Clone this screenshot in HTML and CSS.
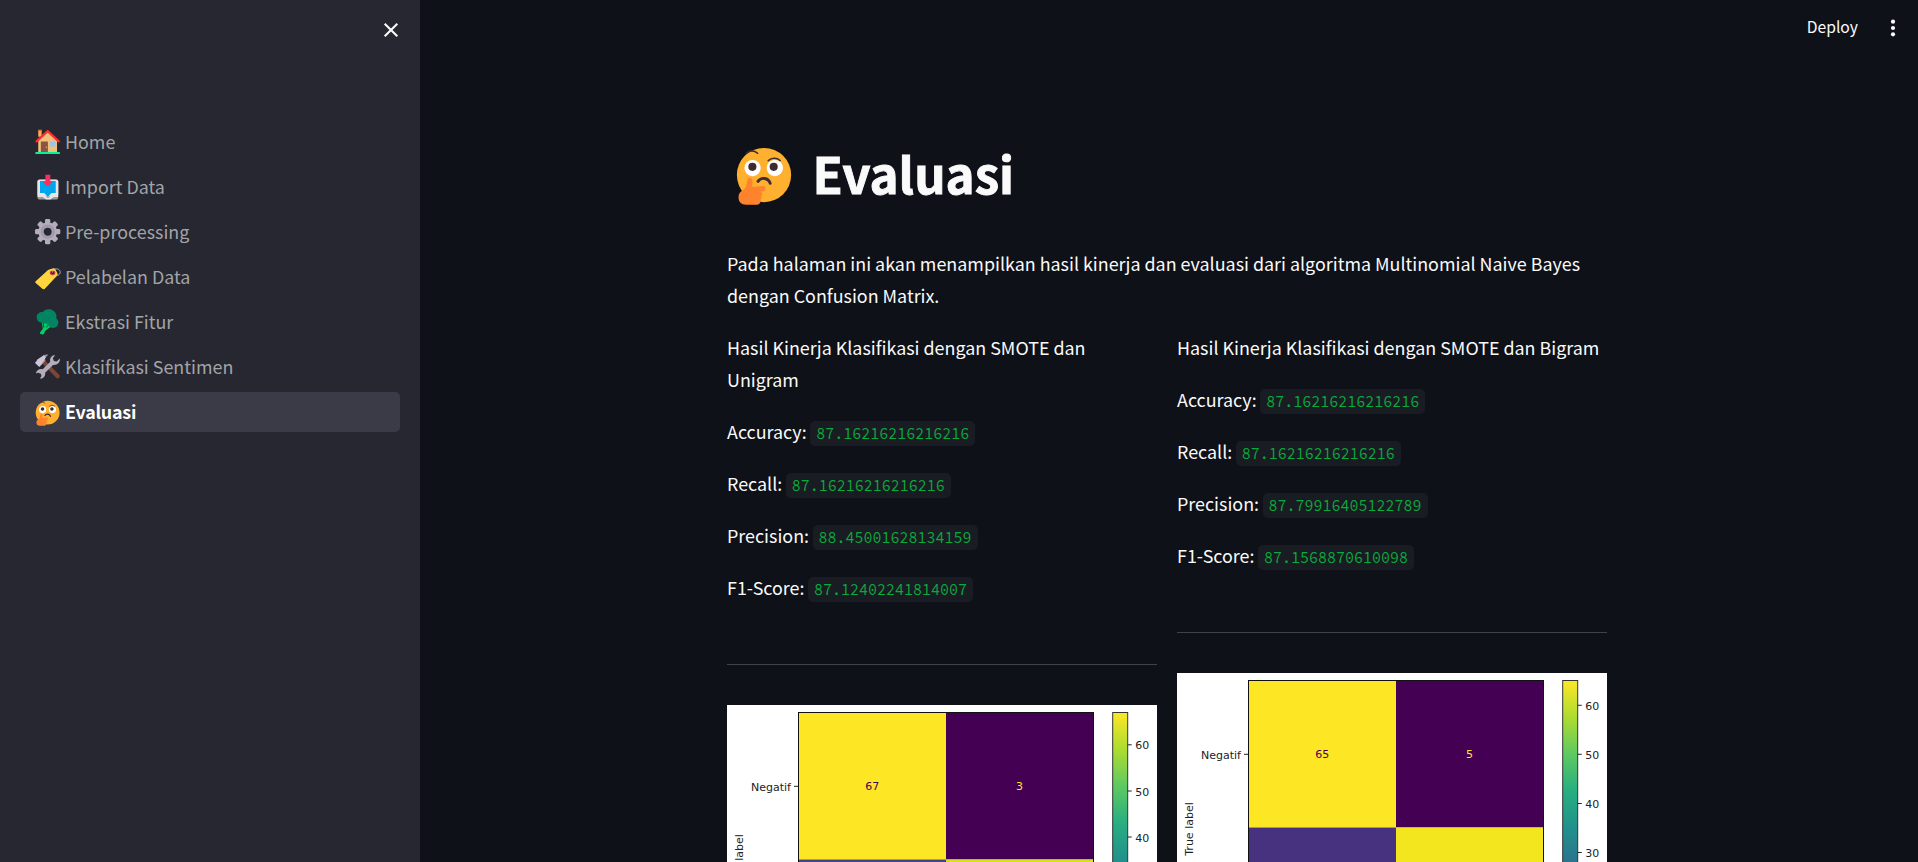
FILE: index.html
```html
<!DOCTYPE html>
<html lang="id">
<head>
<meta charset="utf-8">
<title>Evaluasi</title>
<link rel="stylesheet" href="styles.css">
</head>
<body>
<svg class="defs" width="0" height="0" aria-hidden="true">
  <defs>
    <symbol id="thinking" viewBox="0 0 32 32">
      <circle cx="16" cy="16" r="14" fill="#ffb02e"/>
      <circle cx="10.1" cy="12.4" r="4.2" fill="#fff"/>
      <circle cx="21.6" cy="12.4" r="4.2" fill="#fff"/>
      <circle cx="10" cy="11.8" r="2.1" fill="#402a32"/>
      <circle cx="21" cy="11.8" r="2.1" fill="#402a32"/>
      <path d="M7 4.7C8.4 3.3 10.8 3 12.7 4.8M18.2 8.6C19.8 7.1 22.5 6.9 24.3 8.5" fill="none" stroke="#402a32" stroke-width=".8" stroke-linecap="round"/>
      <path d="M12.9 19.3C14.5 17 18.2 17.2 19.2 20.3" fill="none" stroke="#402a32" stroke-width="1.5" stroke-linecap="round"/>
      <path d="M8.6 17.4c1.3 0 1.6 1.2 1.5 2.3L9.9 22.2l5.7-.5c1.5 0 1.7 2.3.2 2.6l-1.3.3c.7.5.7 1.6 0 2.1.4.6.3 1.6-.3 2 .3 1.4-.4 2.7-2 2.7H6.8C4 31.4 2.6 29.5 2.9 27c.1-1.5.8-2.3 2.2-3.1 1-.6 1.5-1.4 1.8-2.6l.5-2.5c.2-.9.5-1.4 1.2-1.4z" fill="#ff822d"/>
    </symbol>
    <symbol id="home" viewBox="0 0 32 32">
      <path d="M5 3.2h4v7H5z" fill="#f3ad61"/>
      <path d="M16 4.5 5 15v14.5h22V15z" fill="#f3c07b"/>
      <path d="M8 15.8h8.3v13.7H8z" fill="#8c5543"/>
      <circle cx="14.5" cy="22.5" r=".8" fill="#f3ad61"/>
      <rect x="19" y="15.8" width="6" height="6" rx=".8" fill="#8cc8fb"/>
      <path d="M3 15.7 16 3.7l13 12" fill="none" stroke="#f8312f" stroke-width="2.6" stroke-linecap="round" stroke-linejoin="round"/>
      <rect x="1.5" y="28.2" width="29" height="2.4" rx="1" fill="#00f397"/>
      <path d="M4.8 2.6h4.4" stroke="#ff822d" stroke-width="1.3"/>
    </symbol>
    <symbol id="inbox" viewBox="0 0 32 32">
      <rect x="4" y="8" width="24.5" height="23" rx="3" fill="#9b9b9b"/>
      <rect x="4" y="7.5" width="24.5" height="20" rx="2.5" fill="#e6e6e6"/>
      <path d="M7 9.5h18.5v14h-5L16.2 28 12 23.5H7z" fill="#00a6ed"/>
      <path d="M4.5 25h6.5l4.5 4h1.7l4.5-4h6.5v3h-5l-4 3h-5l-4-3h-6z" fill="#e6e6e6"/>
      <path d="M13.3 2h5.8v8h3L16.2 16l-5.9-6h3z" fill="#f92f60"/>
    </symbol>
    <symbol id="gear" viewBox="0 0 32 32">
      <g fill="#b4acbc">
        <rect x="12.9" y="1.2" width="6.2" height="29.6" rx="1.6"/>
        <rect x="12.9" y="1.2" width="6.2" height="29.6" rx="1.6" transform="rotate(45 16 16)"/>
        <rect x="12.9" y="1.2" width="6.2" height="29.6" rx="1.6" transform="rotate(90 16 16)"/>
        <rect x="12.9" y="1.2" width="6.2" height="29.6" rx="1.6" transform="rotate(135 16 16)"/>
        <circle cx="16" cy="16" r="11"/>
      </g>
      <circle cx="16" cy="16" r="7.2" fill="#262730" stroke="#998ea4" stroke-width="2"/>
      <circle cx="16" cy="16" r="6" fill="none" stroke="#a79db0" stroke-width="2.6"/>
    </symbol>
    <symbol id="tag" viewBox="0 0 32 32">
      <g transform="translate(0 4.4) scale(1 .87)">
        <path d="M2 19.6 15.8 5.2c.9-.9 1.8-1.5 3-1.9L22.6 2c1-.2 2 .2 2.4 1.2l2.3 5.2c.5 1.2.4 2.2-.2 3.3-.6 1.2-1.3 2-2.3 3L12.7 29.6c-.9 1-2 1-2.9.1L2 22c-.8-.8-.8-1.6 0-2.4z" fill="#ffd53e"/>
        <circle cx="21.8" cy="8.2" r="3.3" fill="#d3304d"/>
        <circle cx="21.8" cy="8.2" r="1.7" fill="#262730"/>
        <path d="M21.7 7.8c-.2-4.5 4-5.8 6.8-4.4 3.3 1.8 2.8 6.6-.5 8-1.2.5-2.2.3-3-.1" fill="none" stroke="#c5bdcb" stroke-width="1.1"/>
      </g>
    </symbol>
    <symbol id="broccoli" viewBox="0 0 32 32">
      <path d="m9 16 1.4 8.2L7 28.8c-.3.8.1 1.4.8 1.6l2.3.6c.8.1 1.4-.2 1.7-1l1.2-3.1 6.5-5-3-6z" fill="#00d26a"/>
      <path d="m10.8 17.5.8 5.5M17.8 19.2l-3.6 3.5" stroke="#262730" stroke-width="1"/>
      <path d="M3.2 11.5c-.5-4.3 2.8-7.2 7.3-6.8 2-3.7 8.4-4.2 12.2-1.6 3.3 2.2 4.3 5.7 3.4 8.9 3.3 2.8 3.3 7.4.2 10-2.8 2.3-6.8 2-9.2-.8l-3.2-3.3c-1.9.6-3.3.7-4.8-.5C5.7 17 3.3 15 3.2 11.5z" fill="#008463"/>
    </symbol>
    <symbol id="tools" viewBox="0 0 32 32">
      <path d="m9.3 11.8 3.4-3.2 17 17.2c.8.8.8 1.7.1 2.5l-1 1c-.8.8-1.7.8-2.5 0z" fill="#7d4533"/>
      <path d="M11.3 2.5c1.6-.8 3.3-1 5.4-.5l-4 4.3.8 2.9-5 5-2.3-2z" fill="#9b8fa4"/>
      <path d="M11.3 2.5 14 5l-5.8 9.5-2 2L1 11.3l2-1.6.5-1.8z" fill="#cdc4d6"/>
      <path d="M24.8 2.2c-3.6.2-6.2 3-6 6.6l.2 1.4-8.8 8.8c-3.8-.9-7.5 1.2-7.9 5l2.6-.9 3.1 1.3.8 2.6-1.9 3c3.8.4 6.8-2.7 6.2-6.8l9.2-9.2c4.4.6 8.4-2.5 8.2-7.5l-4 3.4-3.2-.6-1.2-3z" fill="#b4acbc"/>
    </symbol>
    <linearGradient id="viridis" x1="0" y1="1" x2="0" y2="0">
      <stop offset="0" stop-color="#440154"/><stop offset=".125" stop-color="#472d7b"/>
      <stop offset=".25" stop-color="#3b528b"/><stop offset=".375" stop-color="#2c728e"/>
      <stop offset=".5" stop-color="#21918c"/><stop offset=".625" stop-color="#28ae80"/>
      <stop offset=".75" stop-color="#5ec962"/><stop offset=".875" stop-color="#addc30"/>
      <stop offset="1" stop-color="#fde725"/>
    </linearGradient>
  </defs>
</svg>
<div class="app">
  <aside class="sidebar">
    <div class="sidebar-head">
      <svg class="close" viewBox="0 0 16 16"><path d="m1.7 1.7 12.6 12.6m0-12.6L1.7 14.3"/></svg>
    </div>
    <nav class="nav">
      <a class="nav-link"><svg><use href="#home"/></svg><span>Home</span></a>
      <a class="nav-link"><svg><use href="#inbox"/></svg><span>Import Data</span></a>
      <a class="nav-link"><svg><use href="#gear"/></svg><span>Pre-processing</span></a>
      <a class="nav-link"><svg><use href="#tag"/></svg><span>Pelabelan Data</span></a>
      <a class="nav-link"><svg><use href="#broccoli"/></svg><span>Ekstrasi Fitur</span></a>
      <a class="nav-link"><svg><use href="#tools"/></svg><span>Klasifikasi Sentimen</span></a>
      <a class="nav-link active"><svg><use href="#thinking"/></svg><span>Evaluasi</span></a>
    </nav>
  </aside>
  <main class="main">
    <header class="toolbar">
      <span class="deploy">Deploy</span>
      <svg class="menu" viewBox="0 0 6 18"><circle cx="3" cy="2.7" r="2.1"/><circle cx="3" cy="9" r="2.1"/><circle cx="3" cy="15.3" r="2.1"/></svg>
    </header>
    <div class="content">
      <h1 class="title"><svg><use href="#thinking"/></svg><span>Evaluasi</span></h1>
      <p class="text">Pada halaman ini akan menampilkan hasil kinerja dan evaluasi dari algoritma Multinomial Naive Bayes dengan Confusion Matrix.</p>
      <div class="columns">
        <section class="column">
          <p class="text">Hasil Kinerja Klasifikasi dengan SMOTE dan Unigram</p>
          <p class="metric">Accuracy: <code>87.16216216216216</code></p>
          <p class="metric">Recall: <code>87.16216216216216</code></p>
          <p class="metric">Precision: <code>88.45001628134159</code></p>
          <p class="metric">F1-Score: <code>87.12402241814007</code></p>
          <hr class="rule">
          <svg class="chart" viewBox="0 0 430 350">
            <rect width="430" height="350" fill="#fff"/>
            <path fill="#fde725" d="M71.5 7.5H219v147H71.5z"/><path fill="#440154" d="M219 7.5h147.5v147H219z"/>
            <path fill="#414487" d="M71.5 154.5H219V302H71.5z"/><path fill="#d2e21b" d="M219 154.5h147.5V302H219z"/>
            <rect class="frame" x="71.5" y="7.5" width="295" height="294.5"/>
            <rect class="bar" x="385.7" y="7.5" width="15" height="294.5"/>
            <path class="tick" d="M67 81.3h4.5M400.7 39.8h4M400.7 86h4M400.7 132h4"/>
            <text x="64" y="85.8" text-anchor="end">Negatif</text>
            <text class="low" x="145.3" y="84.8" text-anchor="middle">67</text>
            <text class="high" x="292.6" y="84.8" text-anchor="middle">3</text>
            <text x="408.2" y="44.3">60</text><text x="408.2" y="90.5">50</text><text x="408.2" y="136.5">40</text>
            <text transform="translate(16.2 156) rotate(-90)" text-anchor="middle">True label</text>
          </svg>
        </section>
        <section class="column">
          <p class="text">Hasil Kinerja Klasifikasi dengan SMOTE dan Bigram</p>
          <p class="metric">Accuracy: <code>87.16216216216216</code></p>
          <p class="metric">Recall: <code>87.16216216216216</code></p>
          <p class="metric">Precision: <code>87.79916405122789</code></p>
          <p class="metric">F1-Score: <code>87.1568870610098</code></p>
          <hr class="rule">
          <svg class="chart" viewBox="0 0 430 350">
            <rect width="430" height="350" fill="#fff"/>
            <path fill="#fde725" d="M71.5 7.5H219v147H71.5z"/><path fill="#440154" d="M219 7.5h147.5v147H219z"/>
            <path fill="#46327e" d="M71.5 154.5H219V302H71.5z"/><path fill="#f4e61e" d="M219 154.5h147.5V302H219z"/>
            <rect class="frame" x="71.5" y="7.5" width="295" height="294.5"/>
            <rect class="bar" x="385.7" y="7.5" width="15" height="294.5"/>
            <path class="tick" d="M67 81.3h4.5M400.7 32.3h4M400.7 81.3h4M400.7 130.5h4M400.7 179.5h4"/>
            <text x="64" y="85.8" text-anchor="end">Negatif</text>
            <text class="low" x="145.3" y="84.8" text-anchor="middle">65</text>
            <text class="high" x="292.6" y="84.8" text-anchor="middle">5</text>
            <text x="408.2" y="36.8">60</text><text x="408.2" y="85.8">50</text><text x="408.2" y="135">40</text><text x="408.2" y="184">30</text>
            <text transform="translate(16.2 156) rotate(-90)" text-anchor="middle">True label</text>
          </svg>
        </section>
      </div>
    </div>
  </main>
</div>
</body>
</html>
```
FILE: styles.css
```css
* { box-sizing: border-box; }

body {
  margin: 0;
  background: #0e1117;
  color: #fafafa;
  font-family: "Source Sans Pro", "Noto Sans CJK SC", "Noto Sans", sans-serif;
  font-size: 17.9px;
  line-height: 32px;
}

.defs { display: block; }

.app {
  display: flex;
  height: 100vh;
  overflow: hidden;
}

.sidebar {
  flex: 0 0 420px;
  background: #262730;
  padding: 0 20px;
}

.sidebar-head {
  display: flex;
  justify-content: flex-end;
  height: 122px;
  padding: 21.5px 1.5px 0 0;
}

.close {
  width: 16px;
  height: 16px;
  fill: none;
  stroke: #fafafa;
  stroke-width: 2.1;
}

.nav {
  display: flex;
  flex-direction: column;
  gap: 5px;
}

.nav-link {
  display: flex;
  align-items: center;
  gap: 4px;
  height: 40px;
  padding-left: 13.7px;
  border-radius: 5px;
  color: #a3a4a7;
}

.nav-link svg { width: 27.3px; height: 27.3px; }
.nav-link span { padding-bottom: 2px; }

.nav-link.active {
  background: #3b3b47;
  color: #fff;
  font-weight: 700;
  letter-spacing: -.25px;
}

.nav-link.active svg { margin-top: 1px; }

.main { flex: 1; padding-right: 4px; }

.toolbar {
  display: flex;
  justify-content: flex-end;
  align-items: center;
  gap: 31.5px;
  height: 55px;
  padding-right: 18.5px;
  font-size: 15.7px;
}

.deploy { padding-bottom: 2px; }

.menu { width: 6px; height: 18px; fill: #fafafa; }

.content {
  width: 880px;
  margin: 0 auto;
  padding-top: 78px;
}

.title {
  display: flex;
  align-items: center;
  gap: 17.5px;
  height: 80px;
  margin: 0 0 34px;
  padding-left: 6px;
  font-size: 49.3px;
  font-weight: 700;
  line-height: 66px;
  -webkit-text-stroke: .9px #fafafa;
}

.title svg { width: 62px; height: 62px; margin-top: 3px; }

.text { margin: 0 0 20px; }

.columns {
  display: grid;
  grid-template-columns: 1fr 1fr;
  gap: 20px;
}

.metric {
  display: flex;
  align-items: center;
  gap: 3.5px;
  height: 32px;
  margin: 0 0 20px;
}

.metric code {
  height: 25px;
  margin-top: 4px;
  padding: 0 6px;
  border-radius: 5px;
  background: #1a1c24;
  color: #09ab3b;
  font-family: "Source Code Pro", "Noto Sans Mono CJK SC", "DejaVu Sans Mono", monospace;
  font-size: 15px;
  line-height: 25px;
}

.rule {
  height: 1px;
  margin: 61px 0 40px;
  border: 0;
  background: #404247;
}

.chart { display: block; width: 430px; height: 350px; }

.chart text {
  font-family: "DejaVu Sans", sans-serif;
  font-size: 11px;
  fill: #222;
}

.chart .low { fill: #440154; }
.chart .high { fill: #fde725; }
.frame { fill: none; stroke: #111; stroke-width: 1; }
.bar { fill: url(#viridis); stroke: #333; stroke-width: 1; }
.tick { stroke: #222; stroke-width: 1; }
```
